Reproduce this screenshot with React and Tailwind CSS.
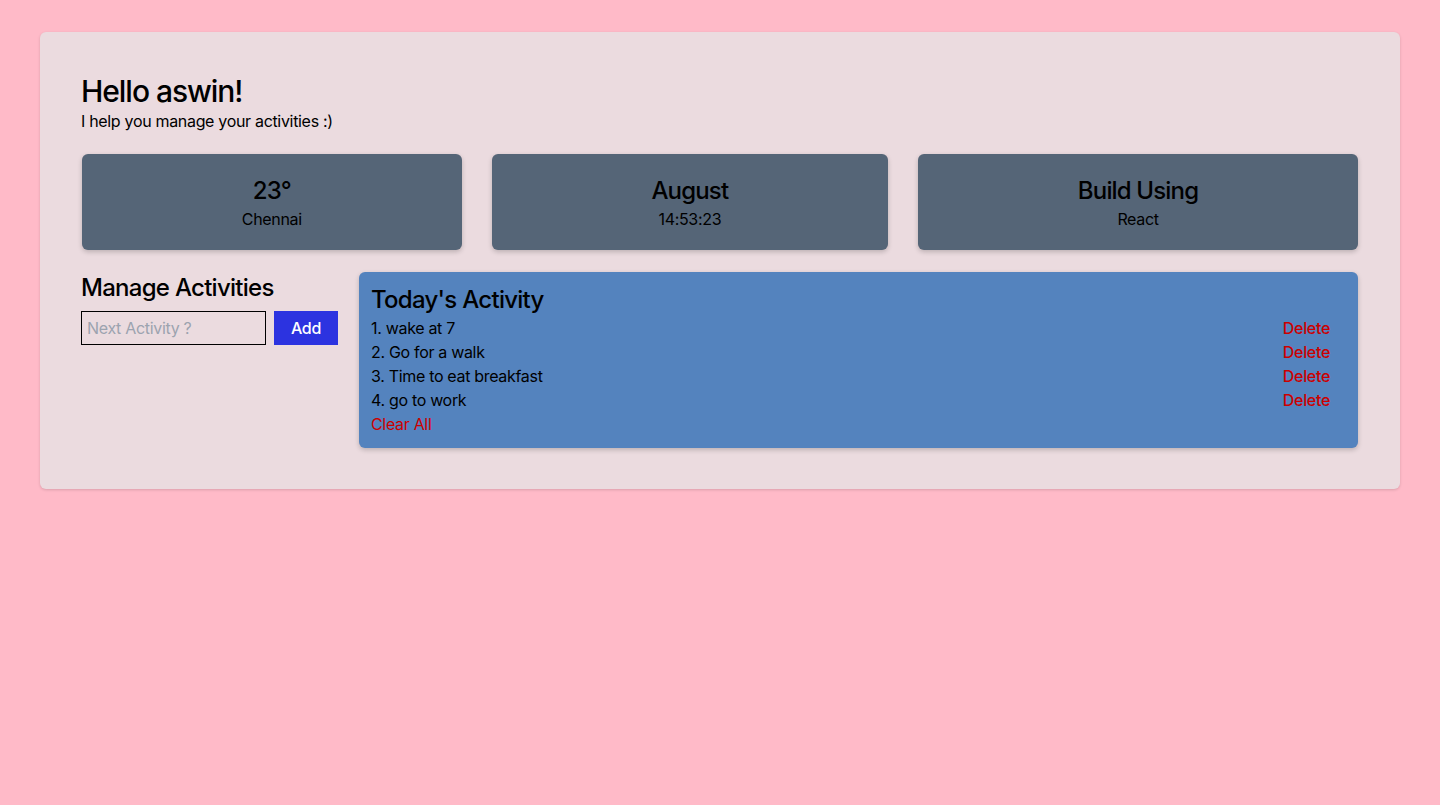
export default function App() {
  const items = ["wake at 7", "Go for a walk", "Time to eat breakfast", "go to work"];
  return (
    <div className="min-h-[805px] bg-[#ffbac8] pt-8 px-10 text-black tracking-[-0.02em]" style={{ fontFamily: "Inter, 'Noto Sans', sans-serif" }}>
      <div className="bg-[#ebdbdf] rounded-md shadow-[0_1px_3px_rgba(0,0,0,0.15)] p-[41px]">
        <h1 className="text-[30px] leading-[36px] font-medium tracking-[-0.035em]">Hello aswin!</h1>
        <p className="text-base leading-6">I help you manage your activities :)</p>
        <div className="flex gap-[30px] mt-[21px] px-px">
          {[
            ["23°", "Chennai"],
            ["August", "14:53:23"],
            ["Build Using", "React"],
          ].map(([t, s]) => (
            <div key={t} className="flex-auto bg-[#556577] rounded-md shadow-[0_2px_5px_rgba(0,0,0,0.2)] pt-[21px] pb-[19px] text-center">
              <div className="text-2xl leading-8 font-medium tracking-[-0.035em]">{t}</div>
              <div className="text-base leading-6">{s}</div>
            </div>
          ))}
        </div>
        <div className="flex gap-[21px] mt-[22px] items-start">
          <div className="w-[257px]">
            <h2 className="text-2xl leading-8 font-medium tracking-[-0.03em]">Manage Activities</h2>
            <div className="flex gap-2 mt-[7px]">
              <input
                className="w-[185px] h-[34px] border border-black bg-transparent px-[5px] text-base placeholder:text-[#9ca3af] outline-none tracking-[-0.02em]"
                placeholder="Next Activity ?"
              />
              <button className="w-[64px] h-[34px] bg-[#2c33e0] text-white text-base font-medium">Add</button>
            </div>
          </div>
          <div className="flex-1 mr-px bg-[#5483be] rounded-md shadow-[0_2px_5px_rgba(0,0,0,0.2)] px-3 pt-3 pb-3">
            <h2 className="text-2xl leading-8 font-medium tracking-[-0.03em]">Today's Activity</h2>
            {items.map((it, i) => (
              <div key={it} className="flex justify-between items-center leading-6 text-base pr-4">
                <span>{i + 1}. {it}</span>
                <span className="text-[#cc0000] font-medium">Delete</span>
              </div>
            ))}
            <div className="text-[#cc0000] text-base leading-6">Clear All</div>
          </div>
        </div>
      </div>
    </div>
  );
}
